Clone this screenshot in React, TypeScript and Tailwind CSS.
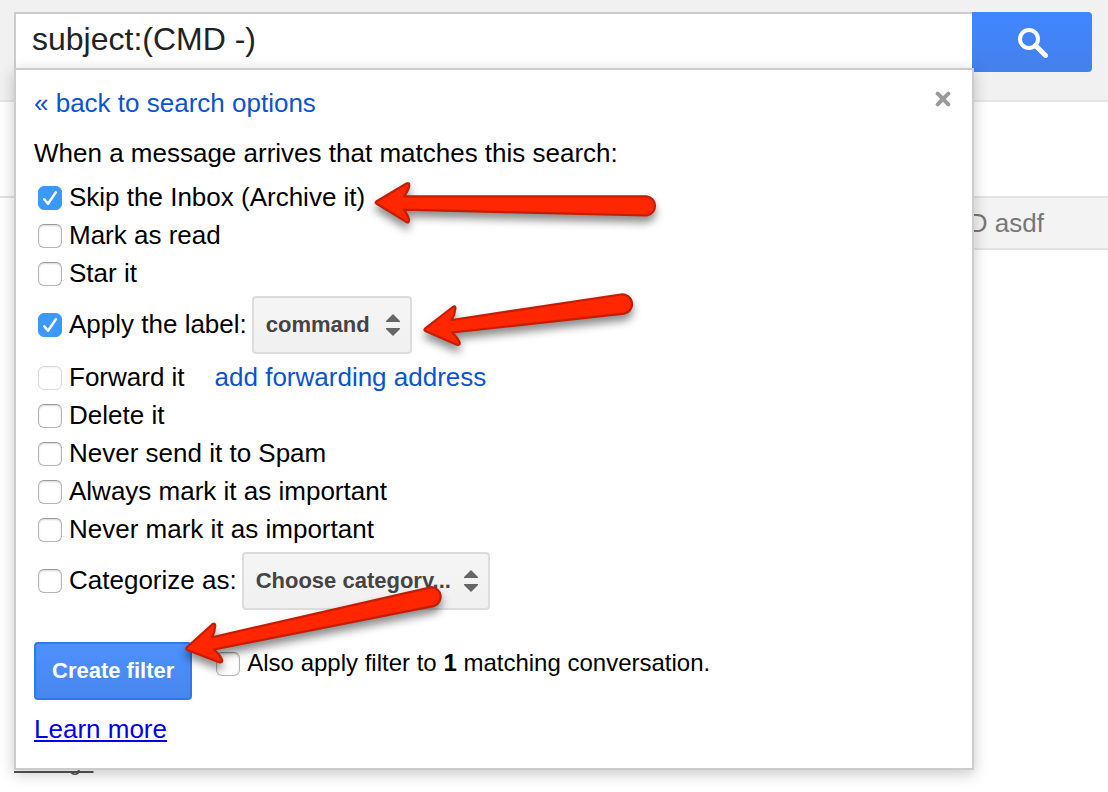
import { useState, type ReactNode } from "react";

type CheckProps = {
  id: string;
  defaultChecked?: boolean;
  disabled?: boolean;
  children: ReactNode;
};

function Check({ id, defaultChecked, disabled, children }: CheckProps) {
  return (
    <span className="flex items-center gap-[7px]">
      <span className="grid size-6 shrink-0">
        <input
          id={id}
          type="checkbox"
          defaultChecked={defaultChecked}
          disabled={disabled}
          className="peer col-start-1 row-start-1 size-6 appearance-none rounded-[6px] border border-[#b4b4b4] border-t-[#999] bg-white shadow-[inset_0_1px_2px_rgba(0,0,0,0.16)] checked:border-[#3b99fc] checked:bg-[#3b99fc] checked:shadow-none disabled:border-[#d8d8d8] disabled:shadow-[inset_0_1px_2px_rgba(0,0,0,0.06)]"
        />
        <svg
          viewBox="0 0 24 24"
          className="pointer-events-none invisible col-start-1 row-start-1 size-6 peer-checked:visible"
          fill="none"
          stroke="#fff"
          strokeWidth="2.5"
          strokeLinecap="round"
          strokeLinejoin="round"
          aria-hidden="true"
        >
          <path d="M6.2 13.2 10 17.8 17.8 6.4" />
        </svg>
      </span>
      <label htmlFor={id} className="pb-0.5 whitespace-nowrap">
        {children}
      </label>
    </span>
  );
}

function Picker({ label, options, className }: { label: string; options: string[]; className: string }) {
  return (
    <span className={`grid items-center ${className}`}>
      <select
        aria-label={label}
        className="col-start-1 row-start-1 h-[58px] w-full appearance-none rounded-[4px] border-2 border-[#dcdcdc] bg-linear-to-b from-[#f5f5f5] to-[#f0f0f0] pr-9 pl-3 text-[22px] font-bold text-[#444]"
      >
        {options.map((o) => (
          <option key={o}>{o}</option>
        ))}
      </select>
      <svg
        viewBox="0 0 14 22"
        className="pointer-events-none col-start-1 row-start-1 mr-3 h-[22px] w-[14px] justify-self-end"
        fill="#666"
        aria-hidden="true"
      >
        <path d="M7 0 14 7v1H0V7zM0 14h14v1l-7 7-7-7z" />
      </svg>
    </span>
  );
}

function Arrow({ d, box, className }: { d: string; box: string; className: string }) {
  return (
    <svg
      viewBox={box}
      className={`pointer-events-none absolute z-10 overflow-visible drop-shadow-[0_6px_4px_rgba(0,0,0,0.45)] ${className}`}
      fill="#ff2600"
      stroke="#c41d00"
      strokeWidth="2.2"
      strokeLinejoin="round"
      aria-hidden="true"
    >
      <path d={d} />
    </svg>
  );
}

const row = "relative flex h-[38px] items-center pl-1";
const tallRow = "relative flex h-16 items-center gap-[5px] pl-1";

function FilterPanel({ onClose }: { onClose: () => void }) {
  return (
    <section
      aria-label="Filter options"
      className="absolute top-14 -right-0.5 left-0 z-20 border-2 border-[#ccc] bg-white px-[18px] pt-[18px] pb-6 text-[26px] leading-[30px] text-black shadow-[0_4px_14px_rgba(0,0,0,0.22)]"
    >
      <div className="flex items-start justify-between">
        <a href="#options" className="text-[#0b53d0]">
          « back to search options
        </a>
        <button type="button" aria-label="Close" onClick={onClose} className="p-[3px]">
          <svg viewBox="0 0 16 16" className="size-4" stroke="#999" strokeWidth="4" strokeLinecap="round" aria-hidden="true">
            <path d="M2.7 2.7l10.6 10.6M13.3 2.7 2.7 13.3" />
          </svg>
        </button>
      </div>
      <p className="mt-5 mb-[11px]">When a message arrives that matches this search:</p>

      <div className={row}>
        <Check id="skip" defaultChecked>
          Skip the Inbox (Archive it)
        </Check>
        <Arrow
          box="375 182 282 42"
          className="top-[3px] left-[341px] h-[42px] w-[282px]"
          d="M376.3 201.5 406.5 183.5Q409.6 182.2 409.3 185.5 408.6 190.5 404 196.3L646.7 196.3A9.7 9.7 0 0 1 646.7 215.5L404 209.7Q408 215.5 409 219.6 409.2 223.4 406.3 221.9L376.3 203.5Q375 202.5 376.3 201.5Z"
        />
      </div>
      <div className={row}>
        <Check id="read">Mark as read</Check>
      </div>
      <div className={row}>
        <Check id="star">Star it</Check>
      </div>
      <div className={`${tallRow} mb-0.5`}>
        <Check id="label" defaultChecked>
          Apply the label:
        </Check>
        <Picker label="Label" options={["command", "New label..."]} className="w-40" />
        <Arrow
          box="424 294 209 52"
          className="top-px left-[390px] h-[52px] w-[209px]"
          d="M425 328.7 452.8 307Q455.7 305.3 455.4 308.5 455 314.5 451.6 320L620.7 294.5A9.7 9.7 0 0 1 624 313.7L452.3 332.5Q457.5 337.5 459.5 342 460.3 345.7 456.8 344.7L425.3 331Q423.8 330.1 425 328.7Z"
        />
      </div>
      <div className={`${row} gap-[30px]`}>
        <Check id="forward" disabled>
          Forward it
        </Check>
        <a href="#forwarding" className="pb-0.5 text-[#0b53d0]">
          add forwarding address
        </a>
      </div>
      <div className={row}>
        <Check id="delete">Delete it</Check>
      </div>
      <div className={row}>
        <Check id="spam">Never send it to Spam</Check>
      </div>
      <div className={row}>
        <Check id="always">Always mark it as important</Check>
      </div>
      <div className={row}>
        <Check id="never">Never mark it as important</Check>
      </div>
      <div className={tallRow}>
        <Check id="categorize">Categorize as:</Check>
        <Picker
          label="Category"
          options={["Choose category...", "Personal", "Social", "Updates"]}
          className="w-[248px]"
        />
      </div>

      <div className="relative mt-[29px] flex items-start gap-6">
        <button
          type="submit"
          className="h-[58px] rounded-[4px] border-2 border-[#3079ed] bg-linear-to-b from-[#4d90fe] to-[#4787ed] px-4 text-[22px] font-bold text-white"
        >
          Create filter
        </button>
        <span className="flex h-11 items-center text-2xl">
          <Check id="also">
            Also apply filter to <b>1</b> matching conversation.
          </Check>
        </span>
        <Arrow
          box="185 586 258 78"
          className="-top-14 left-[151px] h-[78px] w-[258px]"
          d="M186.7 647.5 212.3 624.3Q215.5 622.5 215.2 626 214.9 632 212 637.2L431.8 587.1A9.7 9.7 0 0 1 434.5 605.8L213.8 649.5Q220 654.5 221.9 659.5 222.7 663 219.2 662.3L187.2 650Q185.3 649 186.7 647.5Z"
        />
      </div>
      <a href="#learn" className="mt-3.5 inline-block align-top text-[#0000ee] underline decoration-2 underline-offset-2">
        Learn more
      </a>
    </section>
  );
}

export default function App() {
  const [open, setOpen] = useState(true);
  return (
    <div className="min-h-screen bg-white font-['Liberation_Sans',Arial,sans-serif]">
      <header className="border-b-2 border-[#e5e5e5] bg-[#f1f1f1] px-4 pt-3 pb-7 pl-3.5">
        <form role="search" className="flex items-start" onSubmit={(e) => e.preventDefault()}>
          <div className="relative min-w-0 flex-1">
            <input
              type="text"
              aria-label="Search mail"
              defaultValue="subject:(CMD -)"
              onFocus={() => setOpen(true)}
              className="block h-[58px] w-full border-2 border-r-0 border-[#ccc] bg-white pb-1 pl-4 text-[32px] text-[#222] outline-none"
            />
            {open && <FilterPanel onClose={() => setOpen(false)} />}
          </div>
          <button
            type="submit"
            aria-label="Search"
            className="flex h-[60px] w-[120px] items-center justify-center rounded-r-[4px] bg-linear-to-b from-[#4086ff] to-[#4580eb]"
          >
            <svg viewBox="0 0 32 32" className="size-8" fill="none" stroke="#fff" aria-hidden="true">
              <circle cx="13" cy="13" r="9" strokeWidth="4" />
              <path d="M19.5 19.5 29.5 29.5" strokeWidth="5" strokeLinecap="round" />
            </svg>
          </button>
        </form>
      </header>
      <main className="pt-[94px]">
        <div className="border-t-2 border-[#e2e2e2] pl-3.5">
          <div className="flex h-[52px] items-center justify-end border-b-2 border-[#e2e2e2] bg-[#f3f3f3] pr-16 text-[26px] text-[#777]">
            CMD asdf
          </div>
        </div>
        <footer className="mt-[501px] pl-3.5">
          <a
            href="#manage"
            className="text-[22px] leading-6 text-[#555] underline decoration-2 [text-decoration-skip-ink:none]"
          >
            Manage
          </a>
        </footer>
      </main>
    </div>
  );
}
